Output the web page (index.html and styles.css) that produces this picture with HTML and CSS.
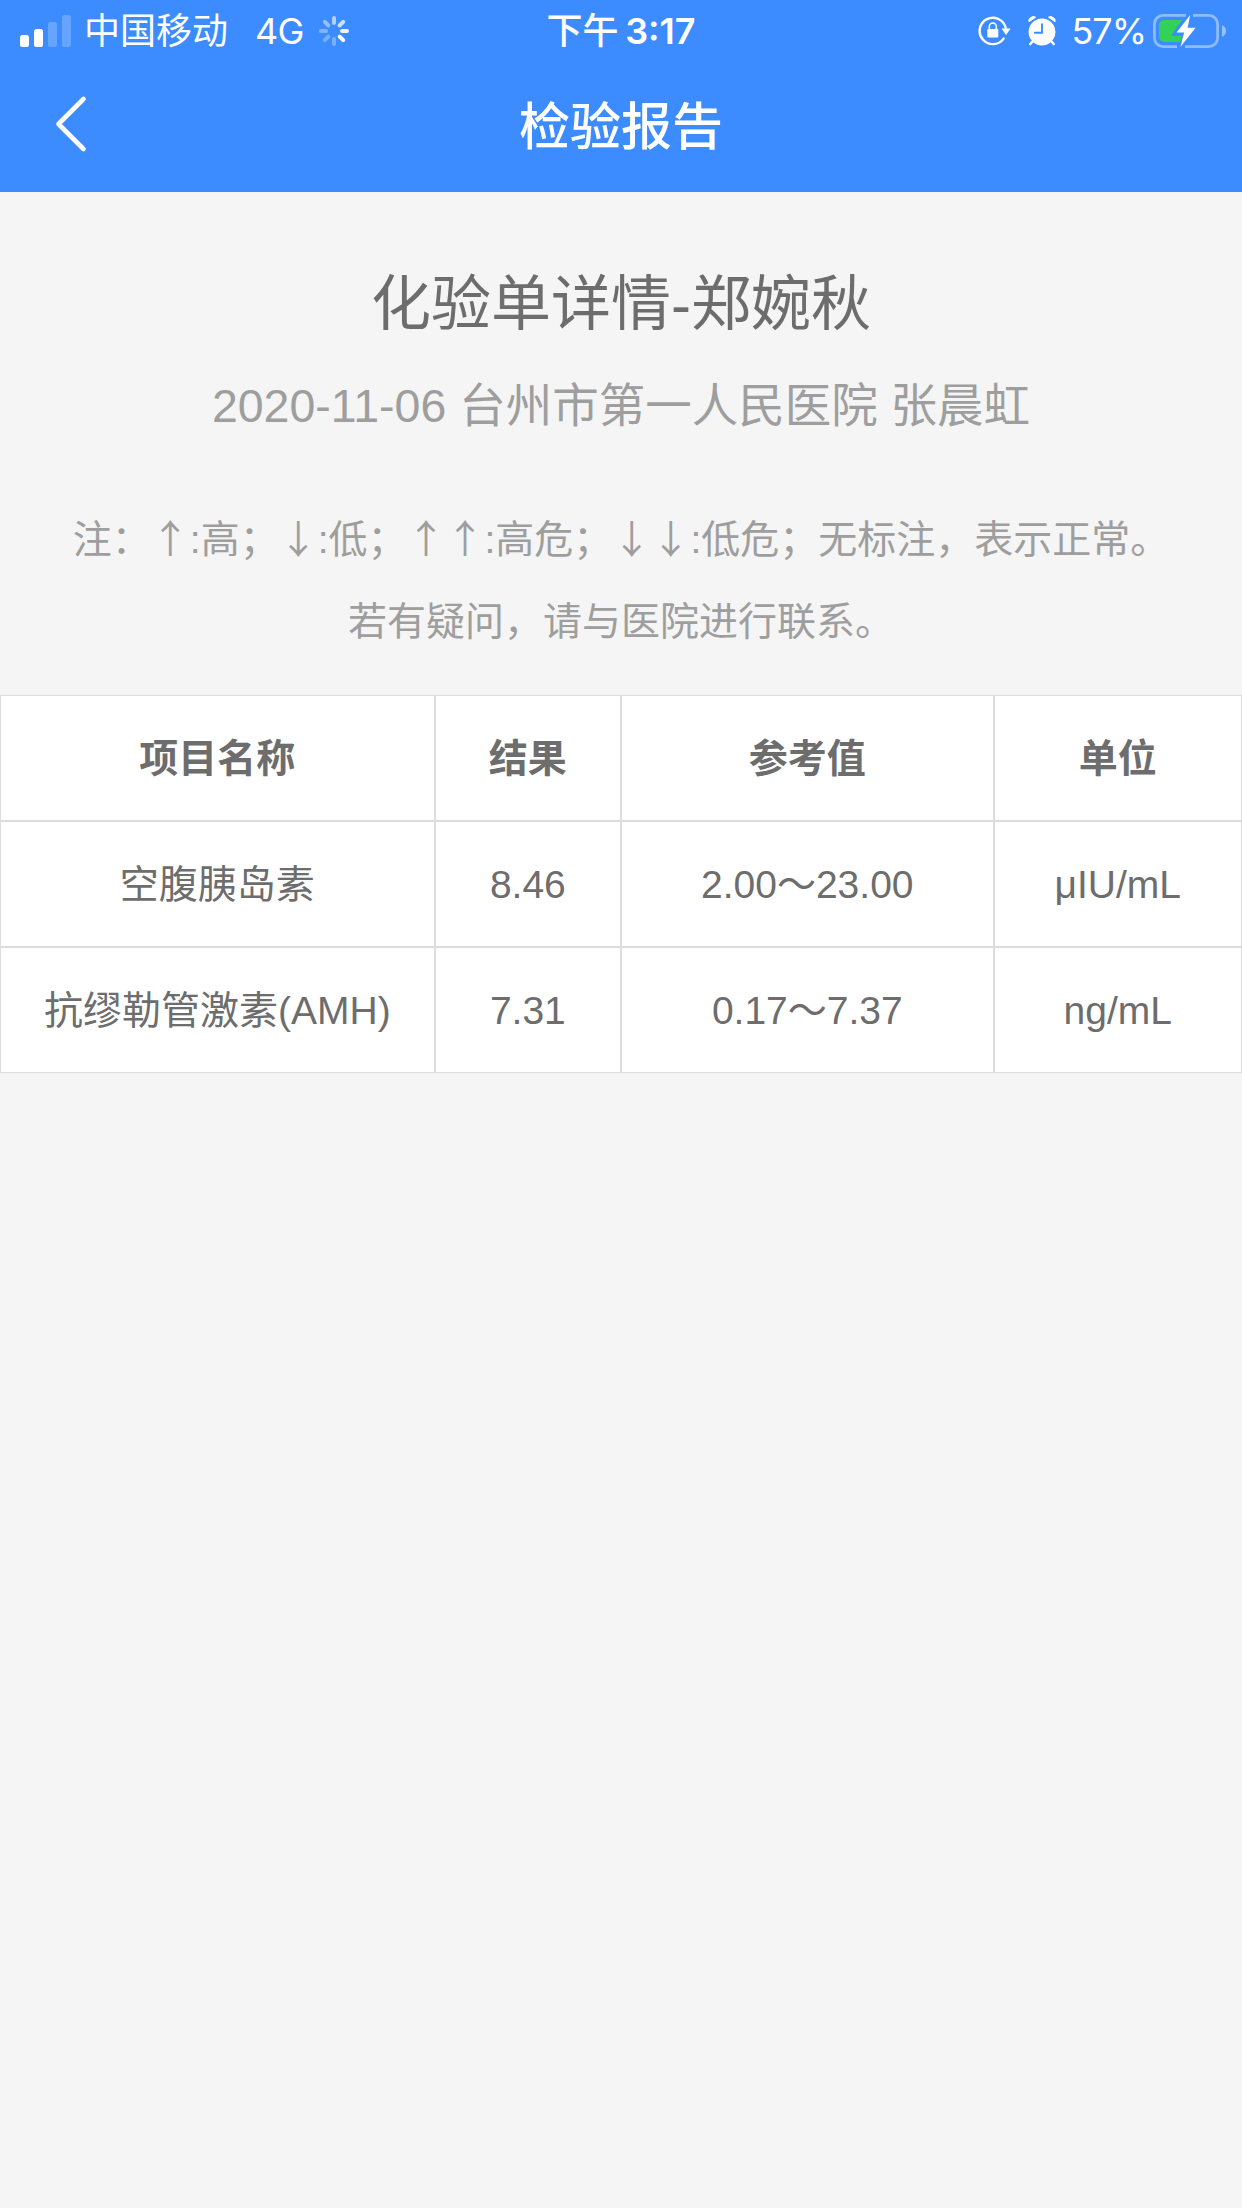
FILE: index.html
```html
<!DOCTYPE html>
<html lang="zh-CN">
<head>
    <meta charset="UTF-8">
    <meta name="viewport" content="width=device-width, initial-scale=1.0">
    <title>检验报告</title>
    <link rel="stylesheet" href="styles.css">
</head>
<body>
    <header class="header">
        <div class="status">
            <div class="status-left">
                <svg class="signal" width="51" height="32" viewBox="0 0 51 32" fill="#fff">
                    <rect x="0" y="20" width="9" height="12" rx="2.5"/>
                    <rect x="14" y="14" width="9" height="18" rx="2.5"/>
                    <rect x="28" y="7" width="9" height="25" rx="2.5" opacity=".22"/>
                    <rect x="42" y="0" width="9" height="32" rx="2.5" opacity=".22"/>
                </svg>
                <span class="carrier">中国移动</span>
                <span class="network">4G</span>
                <svg class="spinner" width="30" height="30" viewBox="-15 -15 30 30" stroke="#fff" stroke-width="4" stroke-linecap="round">
                    <path d="M0-8v-5" opacity=".6"/>
                    <path d="M0-8v-5" opacity=".75" transform="rotate(45)"/>
                    <path d="M0-8v-5" opacity=".9" transform="rotate(90)"/>
                    <path d="M0-8v-5" transform="rotate(135)"/>
                    <path d="M0-8v-5" opacity=".3" transform="rotate(180)"/>
                    <path d="M0-8v-5" opacity=".3" transform="rotate(225)"/>
                    <path d="M0-8v-5" opacity=".36" transform="rotate(270)"/>
                    <path d="M0-8v-5" opacity=".45" transform="rotate(315)"/>
                </svg>
            </div>
            <div class="status-time">下午 <b>3:17</b></div>
            <div class="status-right">
                <!-- rotation lock -->
                <svg class="lock" width="33" height="30" viewBox="0 0 33 30">
                    <path d="M25.6 22.6A13.2 13.2 0 1 1 27.7 12" fill="none" stroke="#fff" stroke-width="2.4" stroke-linecap="round"/>
                    <path d="M23.5 12.5h9l-4.4 6.5z" fill="#fff"/>
                    <rect x="9.3" y="13" width="11" height="8.6" rx="1" fill="#fff"/>
                    <path d="M11.3 13.5v-3a3.5 3.5 0 0 1 7 0v3" fill="none" stroke="#fff" stroke-width="1.6"/>
                </svg>
                <!-- alarm -->
                <svg class="alarm" width="28" height="30" viewBox="0 0 28 30">
                    <circle cx="14" cy="16" r="13.4" fill="#fff"/>
                    <path d="M1 5.8Q0 3.6 2.6 1.6T7.6 1.2zM27 5.8Q28 3.6 25.4 1.6T20.4 1.2z" fill="#fff" stroke="#fff" stroke-linejoin="round"/>
                    <path d="M5 25l-2.7 3M23 25l2.7 3" stroke="#fff" stroke-width="2.6" stroke-linecap="round"/>
                    <path d="M14 8.2v8.6H6.8" fill="none" stroke="#3c8cff" stroke-width="1.9" stroke-linecap="round"/>
                </svg>
                <span class="percent">57%</span>
                <svg class="battery" width="74" height="36" viewBox="0 0 74 36">
                    <g fill="none" stroke="#fff" stroke-width="2.8" opacity=".42">
                        <path d="M34 2.4H11A8.6 8.6 0 0 0 2.4 11v14a8.6 8.6 0 0 0 8.6 8.6h14"/>
                        <path d="M41 2.4h16A8.6 8.6 0 0 1 65.6 11v14a8.6 8.6 0 0 1-8.6 8.6H33"/>
                    </g>
                    <path d="M70 12.2c5.4 2 5.4 9.6 0 11.6z" fill="#fff" opacity=".45"/>
                    <path d="M30 7H12a5 5 0 0 0-5 5v12a5 5 0 0 0 5 5h16.2l1.8-6.2H19z" fill="#32d158"/>
                    <path d="M38.2 2L24.6 19.6h7.5L28.4 34l15.2-19.2h-8z" fill="#fff"/>
                </svg>
            </div>
        </div>
        <div class="nav">
            <svg class="back" width="32" height="58" viewBox="0 0 32 58">
                <path d="M28.5 4L3.5 29l25 25" fill="none" stroke="#fff" stroke-width="4.6" stroke-linecap="round" stroke-linejoin="round"/>
            </svg>
            <h1 class="nav-title">检验报告</h1>
        </div>
    </header>

    <div class="info">
        <h2 class="info-title">化验单详情-郑婉秋</h2>
        <p class="info-sub">2020-11-06 台州市第一人民医院 张晨虹</p>
        <div class="note">
            <p>注：<i>↑</i>:高；<i>↓</i>:低；<i>↑↑</i>:高危；<i>↓↓</i>:低危；无标注，表示正常。</p>
            <p>若有疑问，请与医院进行联系。</p>
        </div>
    </div>

    <table class="report">
        <colgroup>
            <col class="col-name">
            <col class="col-result">
            <col class="col-range">
            <col class="col-unit">
        </colgroup>
        <tr>
            <th>项目名称</th>
            <th>结果</th>
            <th>参考值</th>
            <th>单位</th>
        </tr>
        <tr>
            <td>空腹胰岛素</td>
            <td>8.46</td>
            <td>2.00～23.00</td>
            <td>μIU/mL</td>
        </tr>
        <tr>
            <td>抗缪勒管激素(AMH)</td>
            <td>7.31</td>
            <td>0.17～7.37</td>
            <td>ng/mL</td>
        </tr>
    </table>
</body>
</html>
```

FILE: styles.css
```css
* {
    box-sizing: border-box;
}

body,
h1,
h2,
p {
    margin: 0;
    font-weight: 400;
}

body {
    min-height: 100vh;
    background-color: #f5f5f5;
    color: #6d6d6d;
    font-family: "Liberation Sans", "Noto Sans CJK SC", sans-serif;
}

svg {
    display: block;
    flex: none;
}

/* header */
.header {
    height: 192px;
    background-color: #3c8cff;
    color: #fff;
}

.status {
    display: grid;
    grid-template-columns: 1fr auto 1fr;
    align-items: center;
    height: 62px;
    padding: 0 16px;
    font-family: Inter, "Noto Sans CJK SC", sans-serif;
    font-size: 36px;
    line-height: 62px;
}

.status-left,
.status-right {
    display: flex;
    align-items: center;
    font-weight: 400;
}

.status-right {
    justify-content: flex-end;
}

.signal {
    margin-left: 4px;
}

.carrier {
    margin-left: 13px;
}

.network {
    margin-left: 27px;
    letter-spacing: -0.8px;
}

.spinner {
    margin-left: 15px;
}

.status-time {
    font-weight: 500;
    word-spacing: -3px;
}

.status-time b {
    font-weight: 600;
}

.alarm {
    margin-left: 17px;
}

.percent {
    margin-left: 15px;
    letter-spacing: -1px;
}

.battery {
    margin-left: 6px;
}

.nav {
    display: grid;
    grid-template-columns: 88px 1fr 88px;
    align-items: center;
    height: 124px;
}

.back {
    margin-left: 55px;
}

.nav-title {
    padding-top: 7px;
    font-size: 51px;
    font-weight: 500;
    line-height: 117px;
    text-align: center;
}

/* patient and hospital */
.info {
    height: 503px;
    padding-top: 68px;
    text-align: center;
}

.info-title {
    font-size: 60px;
    line-height: 90px;
}

.info-sub {
    margin-top: 21px;
    color: #9e9e9e;
    font-size: 46.5px;
    line-height: 70px;
}

.note {
    margin-top: 54px;
    color: #9e9e9e;
    font-size: 39px;
    line-height: 82px;
}

.note i {
    font-family: "Noto Sans CJK SC", sans-serif;
    font-style: normal;
}

/* results */
.report {
    width: 100%;
    table-layout: fixed;
    border-spacing: 0;
    background-color: #fff;
    font-size: 39px;
    line-height: 58px;
    text-align: center;
}

.report th,
.report td {
    height: 126px;
    padding: 2px 0 0;
    border: 1px solid #dcdcdc;
}

.col-name {
    width: 35%;
}

.col-result {
    width: 15%;
}

.col-range {
    width: 30%;
}

.col-unit {
    width: 20%;
}
```
